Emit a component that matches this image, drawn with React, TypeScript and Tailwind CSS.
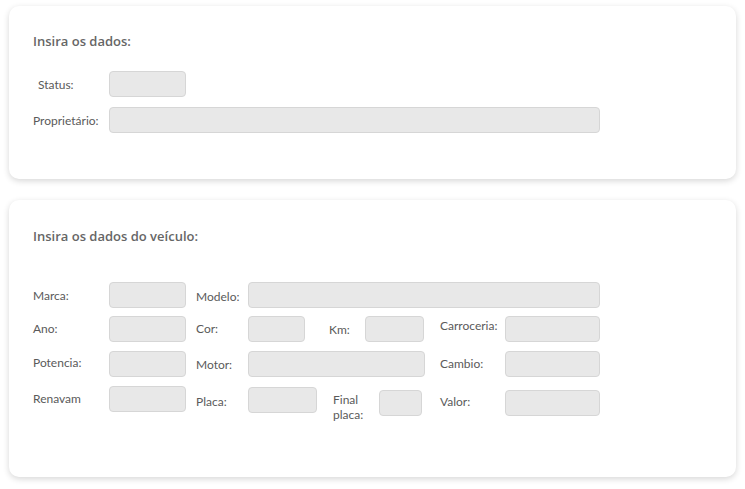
import React from "react"

const font = { fontFamily: '"Open Sans", "Noto Sans", sans-serif' }

function Input({ w, className = "" }: { w: string; className?: string }) {
  return (
    <div
      className={`${w} h-[26px] shrink-0 rounded-[4px] border border-[#d6d6d6] bg-[#e8e8e8] ${className}`}
    />
  )
}

function Label({ w, children, className = "" }: { w: string; children: React.ReactNode; className?: string }) {
  return (
    <span
      className={`${w} shrink-0 text-[12px] leading-[15px] text-[#5a5a5a] ${className}`}
      style={{ fontFamily: 'Lato, "Open Sans", sans-serif' }}
    >
      {children}
    </span>
  )
}

export default function App() {
  return (
    <div className="min-h-screen bg-white px-[9px] pt-[6px] pb-[12px]" style={font}>
      <div className="rounded-[10px] bg-white px-[24px] pt-[26px] pb-[46px] shadow-[0_2px_6px_rgba(0,0,0,0.16)]">
        <h2 className="text-[13px] leading-[18px] font-semibold text-[#666]">Insira os dados:</h2>

        <div className="mt-[21px] flex items-center">
          <Label w="w-[76px]" className="pl-[5px]">Status:</Label>
          <Input w="w-[77px]" />
        </div>
        <div className="mt-[10px] flex items-center">
          <Label w="w-[76px]">Proprietário:</Label>
          <Input w="w-[491px]" />
        </div>
      </div>

      <div className="mt-[21px] rounded-[10px] bg-white px-[24px] pt-[27px] pb-[55px] shadow-[0_2px_6px_rgba(0,0,0,0.16)]">
        <h2 className="text-[13px] leading-[18px] font-semibold text-[#666]">Insira os dados do veículo:</h2>

        <div className="mt-[37px] flex items-center">
          <Label w="w-[76px]">Marca:</Label>
          <Input w="w-[77px]" />
          <Label w="w-[52px]" className="ml-[10px] mt-[2px]">Modelo:</Label>
          <Input w="w-[352px]" />
        </div>

        <div className="mt-[8px] flex items-center">
          <Label w="w-[76px]" className="-mt-[2px]">Ano:</Label>
          <Input w="w-[77px]" />
          <Label w="w-[52px]" className="ml-[10px] -mt-[2px]">Cor:</Label>
          <Input w="w-[57px]" />
          <Label w="w-[36px]" className="ml-[24px]">Km:</Label>
          <Input w="w-[59px]" />
          <Label w="w-[65px]" className="ml-[16px] -mt-[7px]">Carroceria:</Label>
          <Input w="w-[95px]" />
        </div>

        <div className="mt-[8px] flex items-center">
          <Label w="w-[76px]" className="-mt-[2px]">Potencia:</Label>
          <Input w="w-[77px]" />
          <Label w="w-[52px]" className="ml-[10px] mt-[2px]">Motor:</Label>
          <Input w="w-[177px]" className="mt-[1px]" />
          <Label w="w-[65px]" className="ml-[15px]">Cambio:</Label>
          <Input w="w-[95px]" className="mt-[1px]" />
        </div>

        <div className="mt-[9px] flex items-start">
          <Label w="w-[76px]" className="mt-[5px]">Renavam</Label>
          <Input w="w-[77px]" />
          <Label w="w-[52px]" className="ml-[10px] mt-[8px]">Placa:</Label>
          <Input w="w-[69px]" className="mt-[1px]" />
          <Label w="w-[46px]" className="ml-[16px] mt-[6px]">
            Final
            <br />
            placa:
          </Label>
          <Input w="w-[43px]" className="mt-[4px]" />
          <Label w="w-[65px]" className="ml-[18px] mt-[8px]">Valor:</Label>
          <Input w="w-[95px]" className="mt-[4px]" />
        </div>
      </div>
    </div>
  )
}
